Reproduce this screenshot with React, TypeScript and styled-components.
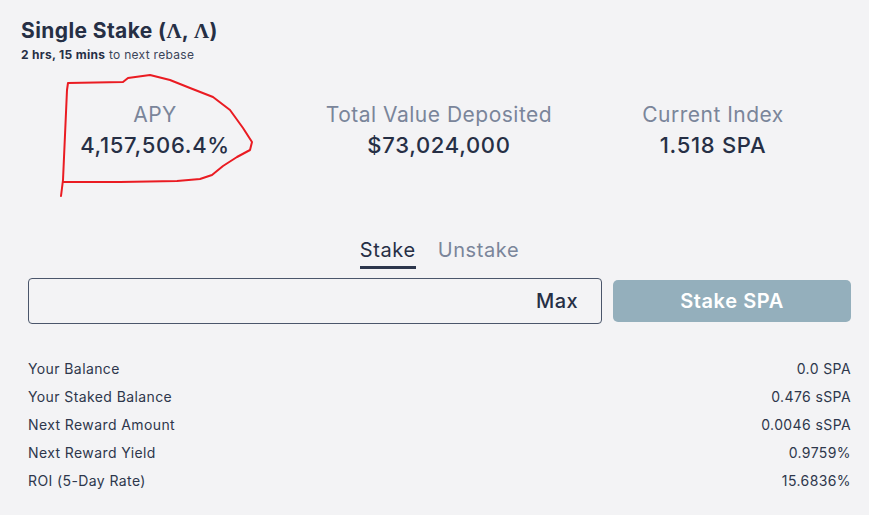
import React, { useState } from "react";
import styled, { createGlobalStyle } from "styled-components";

const GlobalStyle = createGlobalStyle`
  html, body {
    margin: 0;
    padding: 0;
    background: #f3f3f5;
    font-family: Inter, "Open Sans", "Liberation Sans", sans-serif;
    color: #262f45;
  }
`;

const Page = styled.main`
  position: relative;
  width: 869px;
  height: 515px;
  box-sizing: border-box;
  padding: 19px 18px 0 21px;
  overflow: hidden;
`;

const Title = styled.h1`
  margin: 0;
  font-size: 21px;
  line-height: 24px;
  font-weight: 700;
  letter-spacing: 0.4px;
`;

const Lambda = styled.span`
  font-family: "Liberation Serif", "DejaVu Serif", serif;
  font-weight: 700;
`;

const Subtitle = styled.p`
  margin: 5px 0 0;
  font-size: 12px;
  line-height: 14px;
  letter-spacing: 0.3px;
  color: #3b4459;

  strong {
    font-weight: 700;
    color: #262f45;
  }
`;

const Stats = styled.section`
  display: grid;
  grid-template-columns: 268px 300px 1fr;
  margin-top: 41px;
  padding-right: 14px;
`;

const Stat = styled.div`
  display: flex;
  flex-direction: column;
  align-items: center;
`;

const StatLabel = styled.span`
  font-size: 21px;
  line-height: 24px;
  letter-spacing: 0.5px;
  color: #7a859a;
`;

const StatValue = styled.span`
  margin-top: 4px;
  font-size: 22px;
  line-height: 28px;
  font-weight: 500;
  letter-spacing: 0.7px;
  color: #262f45;
`;

const Form = styled.section`
  padding: 0 0 0 7px;
`;

const Tabs = styled.div`
  display: flex;
  justify-content: center;
  gap: 22px;
  margin-top: 79px;
`;

const Tab = styled.button<{ $active?: boolean }>`
  background: none;
  border: none;
  padding: 0 0 4px;
  font-family: inherit;
  font-size: 20px;
  line-height: 24px;
  letter-spacing: 0.6px;
  color: ${(p) => (p.$active ? "#262f45" : "#7a859a")};
  border-bottom: 3px solid ${(p) => (p.$active ? "#2c364c" : "transparent")};
  cursor: pointer;
`;

const StakeRow = styled.div`
  display: flex;
  align-items: center;
  gap: 11px;
  margin-top: 9px;
`;

const InputBox = styled.label`
  flex: 1;
  height: 46px;
  box-sizing: border-box;
  border: 1px solid #4b566b;
  border-radius: 4px;
  display: flex;
  align-items: center;
  padding: 0 23px 0 12px;
`;

const AmountInput = styled.input`
  flex: 1;
  border: none;
  outline: none;
  background: transparent;
  font-family: inherit;
  font-size: 18px;
  color: #262f45;
`;

const MaxText = styled.span`
  font-size: 20px;
  font-weight: 500;
  letter-spacing: 0.4px;
  color: #262f45;
`;

const StakeButton = styled.button`
  width: 238px;
  height: 42px;
  border: none;
  border-radius: 5px;
  background: #94afbc;
  color: #ffffff;
  font-family: inherit;
  font-size: 20px;
  font-weight: 600;
  letter-spacing: 0.6px;
  cursor: pointer;
`;

const InfoList = styled.dl`
  margin: 30px 0 0;
`;

const InfoRow = styled.div`
  display: flex;
  justify-content: space-between;
  align-items: center;
  height: 28px;
  font-size: 14px;
  letter-spacing: 0.4px;
  color: #2e374c;
`;

const InfoTerm = styled.dt`
  margin: 0;
`;

const InfoValue = styled.dd`
  margin: 0;
`;

const Scribble = styled.svg`
  position: absolute;
  left: 0;
  top: 0;
  pointer-events: none;
`;

const info = [
  ["Your Balance", "0.0 SPA"],
  ["Your Staked Balance", "0.476 sSPA"],
  ["Next Reward Amount", "0.0046 sSPA"],
  ["Next Reward Yield", "0.9759%"],
  ["ROI (5-Day Rate)", "15.6836%"],
];

export default function App() {
  const [tab, setTab] = useState<"stake" | "unstake">("stake");

  return (
    <>
      <GlobalStyle />
      <Page>
        <Title>
          Single Stake (<Lambda>Λ</Lambda>, <Lambda>Λ</Lambda>)
        </Title>
        <Subtitle>
          <strong>2 hrs, 15 mins</strong> to next rebase
        </Subtitle>

        <Stats>
          <Stat>
            <StatLabel>APY</StatLabel>
            <StatValue>4,157,506.4%</StatValue>
          </Stat>
          <Stat>
            <StatLabel>Total Value Deposited</StatLabel>
            <StatValue>$73,024,000</StatValue>
          </Stat>
          <Stat>
            <StatLabel>Current Index</StatLabel>
            <StatValue>1.518 SPA</StatValue>
          </Stat>
        </Stats>

        <Form>
          <Tabs>
            <Tab $active={tab === "stake"} onClick={() => setTab("stake")}>
              Stake
            </Tab>
            <Tab $active={tab === "unstake"} onClick={() => setTab("unstake")}>
              Unstake
            </Tab>
          </Tabs>

          <StakeRow>
            <InputBox>
              <AmountInput type="text" />
              <MaxText>Max</MaxText>
            </InputBox>
            <StakeButton>Stake SPA</StakeButton>
          </StakeRow>

          <InfoList>
            {info.map(([label, value]) => (
              <InfoRow key={label}>
                <InfoTerm>{label}</InfoTerm>
                <InfoValue>{value}</InfoValue>
              </InfoRow>
            ))}
          </InfoList>
        </Form>

        {/* hand-drawn red mark around APY */}
        <Scribble width="869" height="515" viewBox="0 0 869 515">
          <path
            d="M61 196 L63 180 L65 135 L67 90 L68 83 L123 82 L128 78 L150 75 L170 80 L190 88 L213 97 L230 110 L243 128 L252 142 L250 150 L237 157 L223 166 L212 175 L200 179 L177 181 L120 182 L63 182"
            fill="none"
            stroke="#ea1b22"
            strokeWidth="2"
            strokeLinejoin="round"
            strokeLinecap="round"
          />
        </Scribble>
      </Page>
    </>
  );
}
